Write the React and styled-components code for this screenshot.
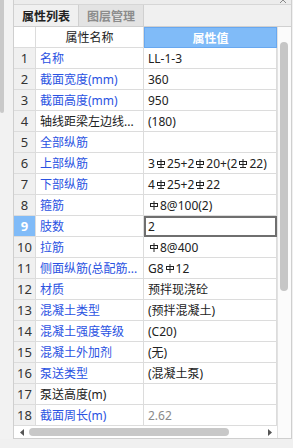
import React from 'react';
import styled, { createGlobalStyle } from 'styled-components';

const GlobalStyle = createGlobalStyle`
  html, body {
    margin: 0;
    padding: 0;
    background: #f0f0f0;
  }
  * {
    box-sizing: border-box;
  }
`;

const Page = styled.div`
  width: 293px;
  height: 448px;
  display: flex;
  align-items: flex-start;
  background: #f0f0f0;
  font-family: "Noto Sans", "Noto Sans CJK SC", sans-serif;
  font-size: 12px;
  color: #222;
  overflow: hidden;
`;

const Gutter = styled.div`
  width: 13px;
  height: 439px;
  background: #f2f2f2;
`;

const GutterThumb = styled.div`
  width: 4px;
  height: 113px;
  background: #c9c9c9;
  border-radius: 0 0 2px 2px;
`;

const Panel = styled.div`
  width: 279px;
  height: 439px;
  display: flex;
  flex-direction: column;
  border: 1px solid #cfcfcf;
  border-top: none;
  background: #fff;
`;

const TitleStrip = styled.div`
  height: 5px;
  display: flex;
  justify-content: flex-end;
  align-items: flex-start;
  padding-right: 4px;
  background: #ececec;
  border-bottom: 1px solid #d6d6d6;
  overflow: hidden;
`;

const TabBar = styled.div`
  height: 22px;
  display: flex;
  background: #f0f0f0;
  border-bottom: 1px solid #d0d0d0;
`;

const Tab = styled.div`
  width: 65px;
  display: flex;
  align-items: center;
  justify-content: center;
  font-weight: bold;
  border-right: 1px solid #d0d0d0;
  background: ${p => (p.$active ? '#f0f0f0' : '#e3e3e3')};
  color: ${p => (p.$active ? '#222' : '#8c8c8c')};
`;

const Body = styled.div`
  flex: 1;
  display: flex;
`;

const GridColumn = styled.div`
  width: 263px;
  display: flex;
  flex-direction: column;
`;

const Grid = styled.div`
  display: grid;
  grid-template-columns: 22px 108px 133px;
  grid-auto-rows: 21px;
`;

const Cell = styled.div`
  display: flex;
  align-items: center;
  padding-left: 4px;
  border-right: 1px solid #dcdcdc;
  border-bottom: 1px solid #dcdcdc;
  white-space: nowrap;
  overflow: hidden;
  background: #fff;
`;

const HeadCell = styled(Cell)`
  justify-content: center;
  padding-left: 0;
  background: ${p => (p.$blue ? '#80bbf8' : '#fff')};
  color: ${p => (p.$blue ? '#fff' : '#222')};
  font-weight: ${p => (p.$blue ? 'bold' : 'normal')};
  border: ${p => (p.$blue ? '1px solid #68a8f0' : undefined)};
`;

const IndexCell = styled(Cell)`
  justify-content: center;
  padding-left: 0;
  font-size: 13px;
  background: ${p => (p.$selected ? '#80bbf8' : '#f0f0f0')};
  color: ${p => (p.$selected ? '#fff' : '#333')};
  font-weight: ${p => (p.$selected ? 'bold' : 'normal')};
`;

const NameCell = styled(Cell)`
  color: ${p => (p.$plain ? '#222' : '#2a52e2')};
`;

const ValueCell = styled(Cell)`
  color: ${p => (p.$muted ? '#8a8a8a' : '#222')};
  ${p => p.$focused && `
    outline: 2px solid #6f6f6f;
    outline-offset: -2px;
  `}
`;

const HScroll = styled.div`
  height: 12px;
  display: flex;
  align-items: center;
  padding-left: 6px;
  background: #fff;
`;

const HThumb = styled.div`
  width: 200px;
  height: 8px;
  margin-left: 5px;
  border-radius: 4px;
  background: #c8c8c8;
`;

const Arrow = styled.svg`
  display: block;
  flex: none;
  margin-left: ${p => p.$gap || 0}px;
`;

const VScroll = styled.div`
  width: 14px;
  background: #fbfbfb;
  border-left: 1px solid #e2e2e2;
  padding: 15px 0 0 2px;
`;

const VThumb = styled.div`
  width: 8px;
  height: 249px;
  border-radius: 4px;
  background: #c6c6c6;
`;

const Mark = styled.svg`
  display: inline-block;
  vertical-align: 3px;
  margin: 0 2px;
`;

// 钢筋等级符号: 1 = 一级, 3 = 三级
const BarMark = ({ grade }) => (
  <Mark width="8" height="9" viewBox="0 0 8 9" fill="none" stroke="currentColor" strokeWidth="1">
    <rect x="0.5" y="2.5" width="7" height="3" />
    <line x1="4" y1="0" x2="4" y2={grade === 3 ? 8 : 9} />
    {grade === 3 && <line x1="1" y1="8.5" x2="7" y2="8.5" />}
  </Mark>
);

const renderValue = text =>
  text.split(/\{(\d)\}/).map((part, i) =>
    i % 2 === 1 ? <BarMark key={i} grade={Number(part)} /> : <React.Fragment key={i}>{part}</React.Fragment>
  );

const rows = [
  { name: '名称', value: 'LL-1-3' },
  { name: '截面宽度(mm)', value: '360' },
  { name: '截面高度(mm)', value: '950' },
  { name: '轴线距梁左边线...', value: '(180)', plain: true },
  { name: '全部纵筋', value: '' },
  { name: '上部纵筋', value: '3{3}25+2{3}20+(2{3}22)' },
  { name: '下部纵筋', value: '4{3}25+2{3}22' },
  { name: '箍筋', value: '{1}8@100(2)' },
  { name: '肢数', value: '2', selected: true },
  { name: '拉筋', value: '{1}8@400' },
  { name: '侧面纵筋(总配筋...', value: 'G8{1}12' },
  { name: '材质', value: '预拌现浇砼' },
  { name: '混凝土类型', value: '(预拌混凝土)' },
  { name: '混凝土强度等级', value: '(C20)' },
  { name: '混凝土外加剂', value: '(无)' },
  { name: '泵送类型', value: '(混凝土泵)' },
  { name: '泵送高度(m)', value: '', plain: true },
  { name: '截面周长(m)', value: '2.62', muted: true },
];

export default function App() {
  return (
    <>
      <GlobalStyle />
      <Page>
        <Gutter>
          <GutterThumb />
        </Gutter>
        <Panel>
          <TitleStrip>
            <svg width="7" height="4" viewBox="0 0 7 4" stroke="#8a8a8a" strokeWidth="1">
              <line x1="0" y1="-3" x2="6" y2="3" />
              <line x1="6" y1="-3" x2="0" y2="3" />
            </svg>
          </TitleStrip>
          <TabBar>
            <Tab $active>属性列表</Tab>
            <Tab>图层管理</Tab>
          </TabBar>
          <Body>
            <GridColumn>
              <Grid>
                <HeadCell />
                <HeadCell>属性名称</HeadCell>
                <HeadCell $blue>属性值</HeadCell>
                {rows.map((r, i) => (
                  <React.Fragment key={i}>
                    <IndexCell $selected={r.selected}>{i + 1}</IndexCell>
                    <NameCell $plain={r.plain}>{r.name}</NameCell>
                    <ValueCell $focused={r.selected} $muted={r.muted}>
                      {renderValue(r.value)}
                    </ValueCell>
                  </React.Fragment>
                ))}
              </Grid>
              <HScroll>
                <Arrow width="4" height="7" viewBox="0 0 4 7">
                  <path d="M4 0 L0 3.5 L4 7 Z" fill="#555" />
                </Arrow>
                <HThumb />
                <Arrow width="4" height="7" viewBox="0 0 4 7" $gap={39}>
                  <path d="M0 0 L4 3.5 L0 7 Z" fill="#555" />
                </Arrow>
              </HScroll>
            </GridColumn>
            <VScroll>
              <VThumb />
            </VScroll>
          </Body>
        </Panel>
      </Page>
    </>
  );
}
